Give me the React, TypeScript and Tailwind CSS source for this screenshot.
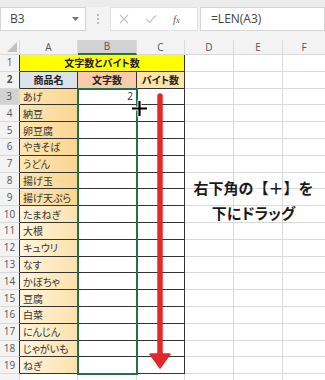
import React from "react";

// Excel sheet capture: LEN() demo with fill-handle drag hint
const items = [
  "あげ",
  "納豆",
  "卵豆腐",
  "やきそば",
  "うどん",
  "揚げ玉",
  "揚げ天ぷら",
  "たまねぎ",
  "大根",
  "キュウリ",
  "なす",
  "かぼちゃ",
  "豆腐",
  "白菜",
  "にんじん",
  "じゃがいも",
  "ねぎ",
];

const jp = "font-['Noto_Sans_CJK_JP',sans-serif] [font-feature-settings:'palt']";

function RowHead({ n, active, dark }: { n?: number; active?: boolean; dark?: boolean }) {
  return (
    <div
      className={`w-[20px] shrink-0 flex items-center justify-center text-[10px] text-[#555] font-['Open_Sans',sans-serif] border-b border-[#d9d9d9] ${
        active ? "bg-[#d2d2d2] border-r-2 border-r-[#217346]" : "bg-[#f3f3f3] border-r"
      } ${!active && dark ? "border-r-[#333]" : "border-r-[#d9d9d9]"}`}
    >
      {n}
    </div>
  );
}

function Blank() {
  return (
    <>
      <div className="w-[49px] shrink-0 border-r border-b border-[#d9d9d9]" />
      <div className="w-[49px] shrink-0 border-r border-b border-[#d9d9d9]" />
      <div className="flex-1 border-b border-[#d9d9d9]" />
    </>
  );
}

export default function App() {
  return (
    <div className="relative w-[325px] h-[380px] overflow-hidden bg-white">
      {/* Toolbar */}
      <div className="h-[40px] bg-[#f3f3f3] flex flex-col">
        <div className="h-[7px] bg-[#ececec]" />
        <div className="h-[24px] flex items-stretch font-['Open_Sans',sans-serif]">
          <div className="w-[86px] bg-white border border-[#d4d4d4] flex items-center justify-between pl-[9px] pr-[6px]">
            <span className="text-[12px] text-[#444]">B3</span>
            <svg width="7" height="5" viewBox="0 0 7 5">
              <path d="M0 0h7L3.5 4z" fill="#777" />
            </svg>
          </div>
          <div className="w-[24px] flex flex-col items-center justify-center gap-[2px]">
            <span className="w-[2px] h-[2px] bg-[#bbb]" />
            <span className="w-[2px] h-[2px] bg-[#bbb]" />
            <span className="w-[2px] h-[2px] bg-[#bbb]" />
          </div>
          <div className="w-[88px] bg-white border border-[#e2e2e2] flex items-center pl-[8px] gap-[16px]">
            <svg width="10" height="10" viewBox="0 0 10 10">
              <path d="M1 1l8 8M9 1l-8 8" stroke="#c4c4c4" strokeWidth="1.2" />
            </svg>
            <svg width="12" height="10" viewBox="0 0 12 10">
              <path d="M1 5l3.5 3.5L11 1.5" stroke="#c4c4c4" strokeWidth="1.2" fill="none" />
            </svg>
            <span className="text-[11px] italic text-[#666] font-['Liberation_Serif',serif]">
              f<span className="text-[9px]">x</span>
            </span>
          </div>
          <div className="ml-[2px] flex-1 bg-white border border-[#d4d4d4] flex items-center pl-[10px]">
            <span className="text-[12px] text-[#444]">=LEN(A3)</span>
          </div>
        </div>
        <div className="flex-1" />
      </div>

      {/* Column headers */}
      <div className="flex h-[15px] bg-[#f3f3f3] text-[10px] text-[#555] font-['Open_Sans',sans-serif]">
        <div className="w-[20px] shrink-0 border-r border-b border-[#d9d9d9] flex items-end justify-end p-[2px]">
          <svg width="10" height="10" viewBox="0 0 10 10">
            <path d="M10 0v10H0z" fill="#c0c0c0" />
          </svg>
        </div>
        <div className="w-[58px] shrink-0 border-r border-b border-[#d9d9d9] flex items-center justify-center">A</div>
        <div className="w-[59px] shrink-0 border-r border-[#d9d9d9] border-b-2 border-b-[#217346] bg-[#d2d2d2] flex items-center justify-center">
          B
        </div>
        <div className="w-[48px] shrink-0 border-r border-b border-[#d9d9d9] flex items-center justify-center">C</div>
        <div className="w-[49px] shrink-0 border-r border-b border-[#d9d9d9] flex items-center justify-center">D</div>
        <div className="w-[49px] shrink-0 border-r border-b border-[#d9d9d9] flex items-center justify-center">E</div>
        <div className="flex-1 border-b border-[#d9d9d9] flex items-center justify-center">F</div>
      </div>

      {/* Row 1 */}
      <div className="flex h-[16.8px]">
        <RowHead n={1} dark />
        <div className={`w-[165px] shrink-0 bg-[#ffff00] border-r border-b border-[#333] flex items-center justify-center text-[10px] font-bold text-[#222] ${jp}`}>
          文字数とバイト数
        </div>
        <Blank />
      </div>

      {/* Row 2 */}
      <div className={`flex h-[16.8px] text-[10px] font-bold text-[#222] ${jp}`}>
        <RowHead n={2} dark />
        <div className="w-[58px] shrink-0 bg-[#dbe2ea] border-r border-b border-[#333] flex items-center justify-center">商品名</div>
        <div className="w-[59px] shrink-0 bg-[#f8cbad] border-r border-b border-[#333] flex items-center justify-center">文字数</div>
        <div className="w-[48px] shrink-0 bg-[#fde3a7] border-r border-b border-[#333] flex items-center justify-center">バイト数</div>
        <Blank />
      </div>

      {/* Rows 3-19 */}
      {items.map((name, i) => {
        const n = i + 3;
        const fill =
          n <= 9
            ? "bg-gradient-to-r from-[#fde6b2] to-[#fbd592]"
            : "bg-gradient-to-r from-[#fff4da] to-[#fde2ad]";
        return (
          <div key={n} className="flex h-[16.8px]">
            <RowHead n={n} active={n === 3} dark />
            <div className={`w-[58px] shrink-0 ${fill} border-r border-b border-[#333] flex items-center pl-[3px] text-[10px] text-[#333] ${jp}`}>
              {name}
            </div>
            <div className="w-[59px] shrink-0 border-r border-b border-[#333] flex items-center justify-end pr-[3px] text-[10px] text-[#333] font-['Open_Sans',sans-serif]">
              {n === 3 ? "2" : ""}
            </div>
            <div className="w-[48px] shrink-0 border-r border-b border-[#333]" />
            <Blank />
          </div>
        );
      })}

      {/* Row 20 (only a sliver shows) */}
      <div className="flex h-[16.8px]">
        <RowHead />
        <div className="w-[58px] shrink-0 border-r border-b border-[#d9d9d9]" />
        <div className="w-[59px] shrink-0 border-r border-b border-[#d9d9d9]" />
        <div className="w-[48px] shrink-0 border-r border-b border-[#d9d9d9]" />
        <Blank />
      </div>

      {/* Selection B3:B19 */}
      <div className="absolute left-[77px] top-[88px] w-[61px] h-[287px] border-2 border-[#217346]" />

      {/* Fill cursor */}
      <svg className="absolute left-[131px] top-[100px]" width="17" height="17" viewBox="0 0 17 17">
        <path d="M8.5 0v17M0 8.5h17" stroke="#fff" strokeWidth="4" />
        <path d="M8.5 1v15M1 8.5h15" stroke="#000" strokeWidth="2.2" />
      </svg>

      {/* Red arrow */}
      <svg className="absolute left-[148px] top-[93px]" width="24" height="278" viewBox="0 0 24 278">
        <path d="M12 3v260" stroke="#e2282a" strokeWidth="5.5" strokeLinecap="round" />
        <path d="M2 261h20l-10 14z" fill="#e2282a" stroke="#e2282a" strokeWidth="1.5" strokeLinejoin="round" />
      </svg>

      {/* Hint text */}
      <div className="absolute left-[185px] top-[175px] w-[137px] flex flex-col items-center text-[15px] leading-[25px] font-semibold text-[#1a1a1a] font-['Noto_Sans_CJK_JP',sans-serif]">
        <span>右下角の【＋】を</span>
        <span className="[font-feature-settings:'palt']">下にドラッグ</span>
      </div>
    </div>
  );
}
